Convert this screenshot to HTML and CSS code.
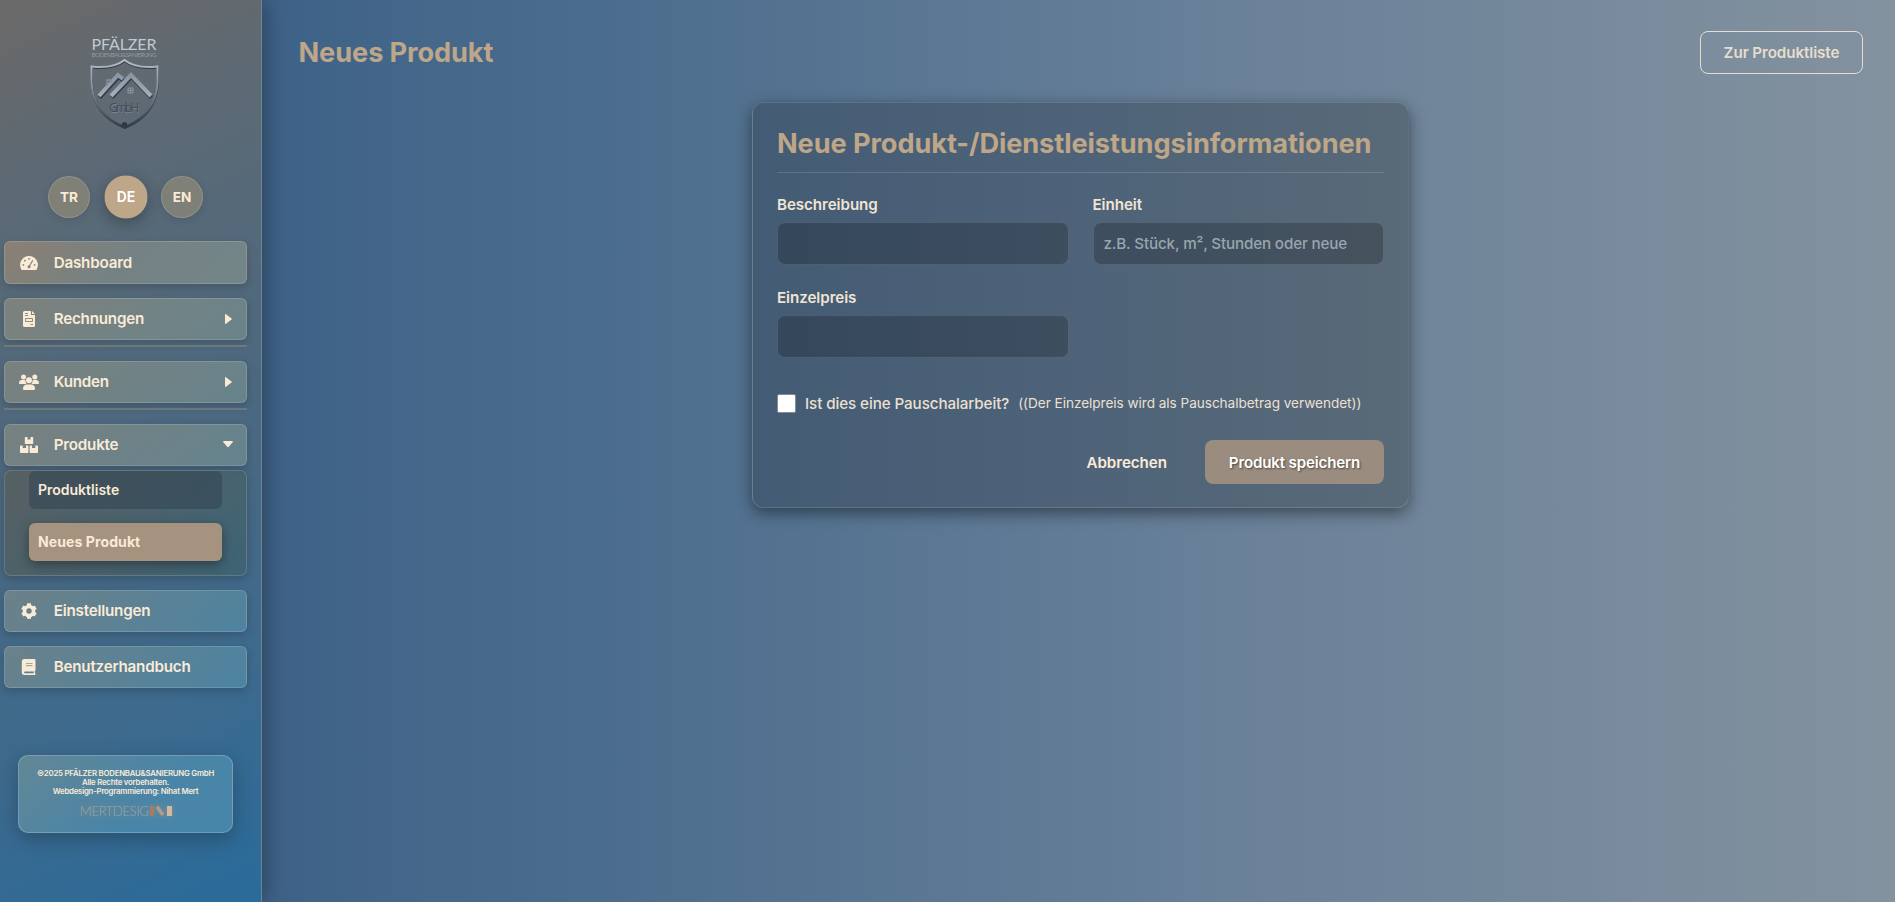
FILE: index.html
```html
<!DOCTYPE html>
<html lang="de">
<head>
<meta charset="utf-8">
<title>Neues Produkt</title>
<link rel="stylesheet" href="styles.css">
</head>
<body>
<div class="app">
  <aside class="sidebar">
    <svg class="logo" viewBox="0 0 80 100">
      <defs>
        <linearGradient id="steel" x1="0" y1="0" x2="0" y2="1">
          <stop offset="0" stop-color="#b4bec9"/><stop offset=".45" stop-color="#7d8995"/><stop offset="1" stop-color="#333e4b"/>
        </linearGradient>
        <linearGradient id="roof" x1="0" y1="0" x2="0" y2="1">
          <stop offset="0" stop-color="#8995a1"/><stop offset="1" stop-color="#a5afbb"/>
        </linearGradient>
      </defs>
      <text class="logo-name" x="7.500" y="18" textLength="65">PFÄLZER</text>
      <text class="logo-sub" x="7.500" y="24.500" textLength="65">BODENBAU&amp;SANIERUNG</text>
      <path d="M41 28Q30 37 8 34.500V50Q9 82 41 95Q73 82 74 50V34.500Q52 37 41 28Z" fill="none" stroke="#303c49" stroke-width="2" transform="translate(-.2 1)"/>
      <path d="M41 28Q30 37 8 34.500V50Q9 82 41 95Q73 82 74 50V34.500Q52 37 41 28Z" fill="none" stroke="url(#steel)" stroke-width="2" transform="translate(-.5 0)"/>
      <path d="M15 64L34 43l5 4M27 64L47 43l20 21" fill="none" stroke="#303c49" stroke-width="4.500" transform="translate(.5 1.500)"/>
      <path d="M15 64L34 43l5 4M27 64L47 43l20 21" fill="none" stroke="url(#roof)" stroke-width="4"/>
      <path d="M23 54v-6h4v3" fill="none" stroke="#84909c" stroke-width="1.500"/>
      <path d="M44 56h5v5h-5zM46.500 56v5M44 58.500h5" fill="none" stroke="#8a96a1" stroke-width="1"/>
      <text class="logo-gmbh-light" x="25.500" y="80.500" textLength="30">GmbH</text>
      <text class="logo-gmbh" x="25" y="80" textLength="30">GmbH</text>
      <circle cx="40.500" cy="92.500" r="2.600" fill="#2c3947"/>
    </svg>
    <div class="langs">
      <span class="lang">TR</span><span class="lang lang-active">DE</span><span class="lang">EN</span>
    </div>
    <nav class="nav">
      <a class="item item-first"><svg class="icon" viewBox="0 0 18 16"><path fill="currentColor" d="M9 1a9 9 0 0 0-7.700 13.500q.3.500.8.500h13.800q.5 0 .8-.5A9 9 0 0 0 9 1z"/><g fill="#85817a"><circle cx="9" cy="3.800" r=".9"/><circle cx="4.900" cy="5.700" r=".9"/><circle cx="3.400" cy="9.800" r=".9"/><circle cx="14.600" cy="9.800" r=".9"/></g><path d="M9.300 11.200L12.600 5.600" stroke="#85817a" stroke-width="1.100" stroke-linecap="round"/><circle cx="9" cy="11.800" r="1.500" fill="#85817a"/></svg><span>Dashboard</span></a>
      <a class="item"><svg class="icon" viewBox="0 0 18 16"><path fill="currentColor" d="M4.500 0H11v4h4v10.500q0 1.500-1.500 1.500h-9Q3 16 3 14.500v-13Q3 0 4.500 0zM12 0l3 3h-3z"/><path d="M5 2.500h3M5 4.500h3M10.500 13.500H13" stroke="#85817a" stroke-width=".9"/><path d="M5.500 7.500h7v3h-7z" fill="none" stroke="#85817a" stroke-width=".9"/></svg><span>Rechnungen</span><svg class="caret" viewBox="0 0 7 10"><path fill="currentColor" d="M0 1Q0-.6 1.300.4L6.500 4.400Q7 5 6.500 5.600L1.300 9.600Q0 10.600 0 9z"/></svg></a>
      <div class="rule"></div>
      <a class="item"><svg class="icon icon-wide" viewBox="0 0 20 16"><g fill="currentColor"><circle cx="4.500" cy="3" r="2.500"/><circle cx="15.800" cy="3" r="2.500"/><circle cx="10" cy="6.300" r="3"/><path d="M0 9.300Q0 6 3.200 6h1.900q.8 0 1.400.3-.3 2 1 3.700H.7Q0 10 0 9.300zM20 9.300Q20 6 16.800 6h-1.900q-.8 0-1.400.3.3 2-1 3.700h6.800q.7 0 .7-.7zM4 15Q4 10.500 8 10.500h4q4 0 4 4.500 0 1-1 1H5q-1 0-1-1z"/></g></svg><span>Kunden</span><svg class="caret" viewBox="0 0 7 10"><path fill="currentColor" d="M0 1Q0-.6 1.300.4L6.500 4.400Q7 5 6.500 5.600L1.300 9.600Q0 10.600 0 9z"/></svg></a>
      <div class="rule"></div>
      <a class="item"><svg class="icon" viewBox="0 0 18 16"><path fill="currentColor" d="M5.500 0h2v2.500h3V0h2q.7 0 .7.700v5.600q0 .7-.7.700h-7q-.7 0-.7-.7V.7q0-.7.700-.7zM.7 8.500h2V11H6V8.500h1.700q.7 0 .7.700v6.100q0 .7-.7.700h-7Q0 16 0 15.300V9.200q0-.7.700-.7zM10.300 8.500H12V11h3.300V8.500h2q.7 0 .7.700v6.100q0 .7-.7.700h-7q-.7 0-.7-.7V9.200q0-.7.700-.7z"/></svg><span>Produkte</span><svg class="caret caret-down" viewBox="0 0 10 7"><path fill="currentColor" d="M1 0Q-.6 0 .4 1.300L4.200 5.700Q5 6.500 5.800 5.700L9.600 1.300Q10.600 0 9 0z"/></svg></a>
      <div class="sub">
        <a class="sub-item">Produktliste</a>
        <a class="sub-item sub-active">Neues Produkt</a>
      </div>
      <a class="item item-low"><svg class="icon" viewBox="0 0 18 16"><circle cx="9" cy="8" r="4.500" fill="none" stroke="currentColor" stroke-width="3.600"/><path stroke="currentColor" stroke-width="4" d="M9 .3v3.200M9 12.500v3.200M2.300 4.150l2.800 1.600M12.900 10.250l2.800 1.600M15.700 4.150l-2.800 1.600M5.100 10.250l-2.800 1.600"/></svg><span>Einstellungen</span></a>
      <a class="item item-low"><svg class="icon" viewBox="0 0 18 16"><path fill="currentColor" d="M4.500 0h10q1 0 1 1v10q0 .7-.7 1v2q.7 0 .7 1t-.7 1H4.500Q1.800 16 1.800 13.300V2.700Q1.800 0 4.500 0z"/><path d="M5 12.400h8.700v1.800H5q-.9 0-.9-.9t.9-.9z" fill="#607e8f"/><path d="M6 4.500h6.500M6 6.700h6.500" stroke="#a3aaa3" stroke-width="1.200"/></svg><span>Benutzerhandbuch</span></a>
    </nav>
    <footer class="foot">
      <div>©2025 PFÄLZER BODENBAU&amp;SANIERUNG GmbH</div>
      <div>Alle Rechte vorbehalten.</div>
      <div>Webdesign-Programmierung: Nihat Mert</div>
      <svg class="mert" viewBox="0 0 94 14">
        <text class="mert-text" x="0" y="12" textLength="69">MERTDESIG</text>
        <path d="M70 2h4v10h-4z" fill="#a27e68"/><path d="M75.500 3.500l3-2 6 8.500-3 2z" fill="#b59a84"/><path d="M87 2h5v10h-5z" fill="#d6b99b"/>
      </svg>
    </footer>
  </aside>
  <main class="main">
    <header class="top">
      <h1>Neues Produkt</h1>
      <a class="list-btn">Zur Produktliste</a>
    </header>
    <section class="card">
      <h2>Neue Produkt-/Dienstleistungsinformationen</h2>
      <div class="grid">
        <label class="field">Beschreibung<input type="text"></label>
        <label class="field">Einheit<input type="text" placeholder="z.B. Stück, m², Stunden oder neue"></label>
        <label class="field">Einzelpreis<input type="text"></label>
      </div>
      <div class="check">
        <span class="box"></span>
        <span>Ist dies eine Pauschalarbeit?</span>
        <span class="hint">((Der Einzelpreis wird als Pauschalbetrag verwendet))</span>
      </div>
      <div class="actions">
        <a class="cancel">Abbrechen</a>
        <a class="save">Produkt speichern</a>
      </div>
    </section>
  </main>
</div>
</body>
</html>
```
FILE: styles.css
```css
* { box-sizing: border-box; }
body { margin: 0; font-family: Inter, sans-serif; color: #faebd7; }
.app { display: flex; height: 902px; overflow: hidden; background: linear-gradient(90deg, #345a83 0, #4a6c8d 580px, #6a8199 1250px, #83929f 1895px); }
.sidebar { width: 262px; flex: none; border-right: 1px solid #71858f; background: linear-gradient(155deg, #6b6968 0%, #5c6a75 20%, #4b6880 50%, #3c6a8e 78%, #296b9b 100%); box-shadow: 4px 0 20px rgba(0,0,0,.3); }
.logo { display: block; width: 80px; height: 100px; margin: 32px 0 0 84px; }
.logo-name { font: 16px Lato, sans-serif; fill: #c0c9d3; }
.logo-sub { font: 6.2px Lato, sans-serif; fill: #8f9aa6; }
.logo-gmbh { font: 12px "Open Sans", sans-serif; fill: #414d5a; }
.logo-gmbh-light { font: 12px "Open Sans", sans-serif; fill: #76838f; }
.langs { display: flex; gap: 14.500px; margin: 44px 0 0 48px; }
.lang { display: flex; align-items: center; justify-content: center; width: 42px; height: 42px; border: 1px solid rgba(255,255,255,.15); border-radius: 50%; background: rgba(165,150,120,.5); font-size: 13.600px; font-weight: 700; box-shadow: 0 2px 8px rgba(0,0,0,.12); }
.lang-active { transform: scale(1.03); background: #bea688; color: #fff; box-shadow: 0 4px 14px rgba(0,0,0,.3); border-color: transparent; }
.nav { margin: 23px 14px 0 4px; display: flex; flex-direction: column; }
.item { display: flex; align-items: center; height: 42px; padding: 0 14px 1px; border: 1px solid rgba(255,255,255,.15); border-radius: 6px; background: linear-gradient(135deg, rgba(206,180,135,.32), rgba(165,190,165,.32)); font-size: 15.200px; font-weight: 600; letter-spacing: -.21px; margin-top: 14px; box-shadow: 0 3px 8px rgba(0,0,0,.18); }
.item-first { height: 43px; margin-top: 0; padding-bottom: 0; background: linear-gradient(135deg, rgba(190,150,110,.5), rgba(155,160,145,.45) 50%, rgba(150,162,150,.5)); }
.item-low { background: linear-gradient(135deg, rgba(190,180,145,.32), rgba(110,185,205,.32)); }
.icon { width: 18px; height: 16px; margin: 0 15.700px 0 1px; }
.icon-wide { width: 20px; margin: 0 14.700px 0 0; }
.caret { width: 7px; height: 10px; margin-left: auto; }
.caret-down { width: 10px; height: 7px; margin-right: -1px; }
.rule { height: 2px; margin: 5px 0 0; background: rgba(160,150,130,.4); }
.sub { height: 106px; margin-top: 4px; padding: 0 24px; border: 1px solid rgba(255,255,255,.15); border-radius: 7px; background: linear-gradient(135deg, rgba(95,92,80,.6), rgba(60,96,105,.6)); box-shadow: 0 3px 10px rgba(0,0,0,.2); }
.sub-item { display: flex; align-items: center; height: 38px; padding: 0 0 1px 9px; border-radius: 6px; background: rgba(47,66,80,.52); font-size: 14px; font-weight: 600; }
.sub-active { margin-top: 14px; background: #a5927f; font-weight: 700; letter-spacing: .1px; box-shadow: 0 4px 12px rgba(0,0,0,.35); }
.foot { width: 215px; height: 78px; margin: 67px 0 0 18px; padding-top: 13px; border: 1px solid rgba(255,255,255,.2); border-radius: 10px; background: linear-gradient(135deg, rgba(135,165,160,.5), rgba(90,155,185,.55) 60%); box-shadow: 0 6px 20px rgba(0,0,0,.25); text-align: center; font-size: 7.800px; letter-spacing: -.22px; line-height: 9px; font-weight: 600; white-space: nowrap; }
.mert { display: block; width: 94px; height: 14px; margin: 8px 0 0 60.500px; filter: drop-shadow(0 0 3px rgba(190,150,120,.5)); }
.mert-text { font: 300 13px Lato, sans-serif; letter-spacing: 0; fill: #a6a39b; }
.main { flex: 1; padding: 31px 32px 0 36.500px; }
.top { display: flex; justify-content: space-between; align-items: center; height: 43px; }
h1, h2 { margin: 0; color: #bea688; font-weight: 700; white-space: nowrap; }
h1 { font-size: 27.200px; letter-spacing: -.1px; }
h2 { font-size: 27.200px; letter-spacing: -.1px; line-height: 34px; height: 46px; border-bottom: 1px solid rgba(255,255,255,.15); }
.list-btn { display: flex; align-items: center; justify-content: center; width: 163px; height: 43px; border: 1px solid #e7ddcd; border-radius: 8px; color: #e7ddcd; font-size: 15.200px; font-weight: 600; letter-spacing: -.08px; }
.card { width: 657px; height: 406px; margin: 28px 0 0 453.500px; padding: 24px; border: 1px solid rgba(255,255,255,.13); border-radius: 12px; background: linear-gradient(90deg, #435b74, #4e6379 50%, #596a78); box-shadow: 0 5px 16px rgba(0,0,0,.45); }
.grid { display: grid; grid-template-columns: 1fr 1fr; gap: 24px; margin-top: 23px; }
.field { display: flex; flex-direction: column; font-size: 15.200px; letter-spacing: -.08px; font-weight: 600; line-height: 18px; gap: 8px; color: #f0e4d4; }
input { height: 43px; padding: 0 10px; border: 1px solid rgba(255,255,255,.12); border-radius: 8px; background: rgba(0,0,0,.21); color: #faebd7; font: 500 15.200px Inter, sans-serif; letter-spacing: -.15px; }
input::placeholder { color: #9aa5af; opacity: 1; }
.check { display: flex; align-items: center; height: 20px; margin-top: 35px; font-size: 15.200px; letter-spacing: -.09px; font-weight: 500; color: #ebe0d1; }
.box { width: 19px; height: 19px; margin-right: 9px; border: 1px solid #858c94; border-radius: 2px; background: #fff; }
.hint { margin-left: 9px; font-size: 13.600px; letter-spacing: -.04px; font-weight: 400; }
.actions { display: flex; justify-content: flex-end; align-items: center; margin-top: 27px; font-size: 15.200px; font-weight: 600; letter-spacing: -.06px; }
.cancel { margin-right: 38px; }
.save { display: flex; align-items: center; justify-content: center; width: 179px; height: 44px; border-radius: 8px; background: #9a8c7e; color: #fff; letter-spacing: -.2px; text-shadow: 1px 1px 2px rgba(0,0,0,.5); }
```
